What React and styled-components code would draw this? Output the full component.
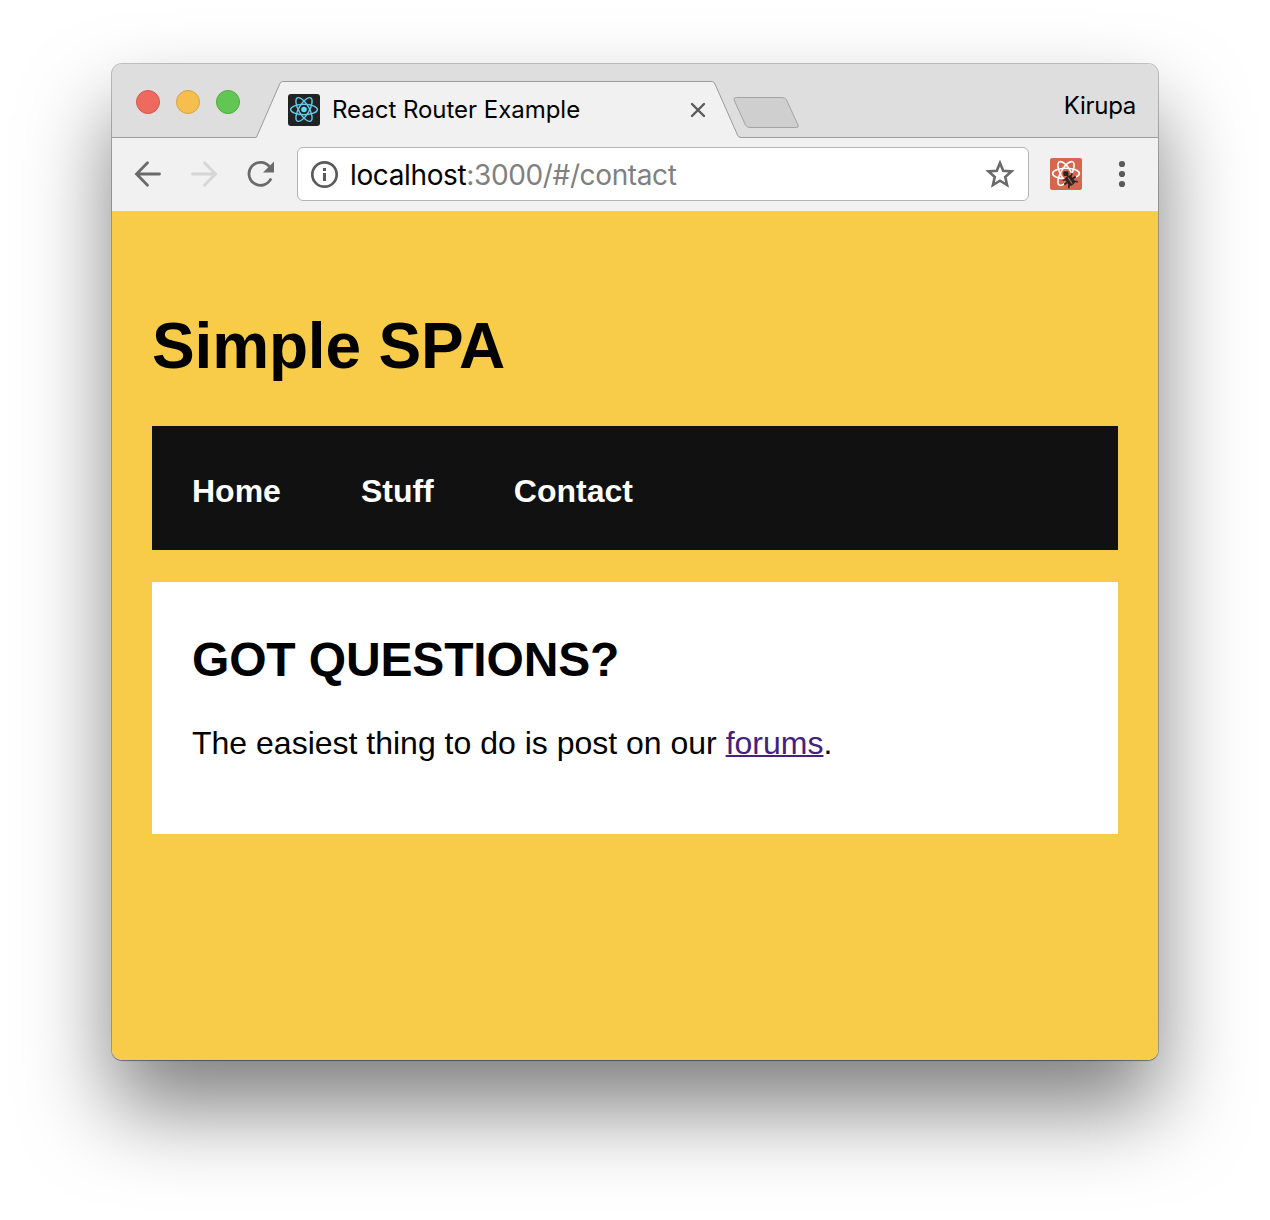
import React from "react";
import styled, { createGlobalStyle } from "styled-components";

const GlobalStyle = createGlobalStyle`
  * { box-sizing: border-box; }
  body { margin: 0; background: #fff; }
`;

const uiFont = `Inter, "Liberation Sans", sans-serif`;
const pageFont = `"Liberation Sans", Arial, sans-serif`;

const Desktop = styled.div`
  width: 1270px;
  height: 1220px;
  padding: 64px 112px 160px;
  overflow: hidden;
`;

const Window = styled.div`
  display: flex;
  flex-direction: column;
  width: 1046px;
  height: 996px;
  border-radius: 10px;
  box-shadow: 0 0 0 1px rgba(0, 0, 0, 0.22), 0 1px 1px rgba(0, 0, 0, 0.25), 0 48px 86px rgba(0, 0, 0, 0.5);
`;

const TabStrip = styled.div`
  display: flex;
  align-items: flex-end;
  height: 74px;
  background: #dedede;
  border-radius: 10px 10px 0 0;
  box-shadow: inset 0 -1px 0 #9b9b9b;
`;

const Lights = styled.div`
  display: flex;
  flex: none;
  gap: 16px;
  width: 144px;
  padding: 0 0 24px 24px;
`;

const Light = styled.span`
  width: 24px;
  height: 24px;
  border-radius: 50%;
  background: ${(p) => p.$fill};
  border: 1px solid ${(p) => p.$edge};
`;

const Tab = styled.div`
  position: relative;
  display: flex;
  flex: none;
  align-items: center;
  width: 485px;
  height: 57px;
  padding: 0 35px 0 32px;
`;

const TabShape = styled.svg`
  position: absolute;
  inset: 0;
`;

const Favicon = styled.svg`
  position: relative;
  flex: none;
`;

const TabTitle = styled.span`
  position: relative;
  flex: 1;
  margin-left: 12px;
  font: 400 24px/30px ${uiFont};
  letter-spacing: -0.03px;
  white-space: nowrap;
  color: #000;
`;

const CloseIcon = styled.svg`
  position: relative;
  flex: none;
`;

const NewTab = styled.svg`
  flex: none;
  margin: 0 0 8px -9px;
`;

const Profile = styled.span`
  margin: 0 22px 17px auto;
  font: 400 24px/30px ${uiFont};
  letter-spacing: -0.3px;
  color: #000;
`;

const Toolbar = styled.div`
  display: flex;
  align-items: center;
  height: 74px;
  padding: 0 20px 2px 22px;
  background: #f1f1f1;
  border-bottom: 1px solid #d0d0d0;
`;

const NavIcons = styled.div`
  display: flex;
  flex: none;
  gap: 24px;
  width: 163px;
`;

const AddressBar = styled.div`
  display: flex;
  flex: none;
  align-items: center;
  width: 732px;
  height: 54px;
  padding: 0 12px 0 10px;
  background: #fff;
  border: 1px solid #b4b4b4;
  border-radius: 6px;
`;

const Url = styled.span`
  flex: 1;
  margin-left: 10px;
  padding-top: 2px;
  font: 400 28px/34px ${uiFont};
  letter-spacing: -0.37px;
  white-space: nowrap;
  color: #808080;
`;

const Host = styled.span`
  color: #000;
`;

const Extension = styled.svg`
  flex: none;
  margin-left: 21px;
`;

const MenuIcon = styled.svg`
  flex: none;
  margin-left: 24px;
`;

const Page = styled.main`
  flex: 1;
  padding: 101px 40px 0;
  background: #f8cc48;
  border-radius: 0 0 10px 10px;
  font-family: ${pageFont};
  color: #000;
`;

const Title = styled.h1`
  margin: 0 0 47px;
  font-size: 64px;
  line-height: 66px;
  font-weight: 700;
  letter-spacing: -0.15px;
`;

const NavBar = styled.nav`
  display: flex;
  align-items: center;
  gap: 80px;
  height: 124px;
  padding: 5px 40px 0;
  background: #111;
`;

const NavLink = styled.a`
  font-size: 32px;
  line-height: 36px;
  font-weight: 700;
  color: #fff;
`;

const Card = styled.section`
  height: 252px;
  margin-top: 32px;
  padding: 51px 40px 0;
  background: #fff;
`;

const CardTitle = styled.h2`
  margin: 0;
  font-size: 48px;
  line-height: 54px;
  font-weight: 700;
  letter-spacing: -0.15px;
`;

const Paragraph = styled.p`
  margin: 38px 0 0;
  font-size: 32px;
  line-height: 36px;
`;

const ForumLink = styled.a`
  color: #44217f;
  text-decoration: underline;
  text-decoration-thickness: 2px;
`;

function Orbits({ color, width }) {
  return (
    <g fill="none" stroke={color} strokeWidth={width}>
      <ellipse cx="16" cy="15.500" rx="13.400" ry="5.200" />
      <ellipse cx="16" cy="15.500" rx="13.400" ry="5.200" transform="rotate(60 16 15.5)" />
      <ellipse cx="16" cy="15.500" rx="13.400" ry="5.200" transform="rotate(120 16 15.5)" />
    </g>
  );
}

function ReactFavicon() {
  return (
    <Favicon width="32" height="32" viewBox="0 0 32 32">
      <rect width="32" height="32" rx="3" fill="#222" />
      <Orbits color="#61cdec" width="1.4" />
      <circle cx="16" cy="15.500" r="2.800" fill="#61dafb" />
    </Favicon>
  );
}

function DevtoolsIcon() {
  return (
    <Extension width="32" height="32" viewBox="0 0 32 32">
      <rect width="32" height="32" rx="2" fill="#d6674f" />
      <Orbits color="#fff" width="1.6" />
      <path d="M14 17.500L22 14.500 26 19.500 27 29H14.500Z" fill="#d6674f" />
      <rect x="13.300" y="13.200" width="5.200" height="4.800" rx="1.200" fill="#2b2522" />
      <g transform="rotate(-35 20 22.5)">
        <path
          d="M17 19.500l-3-1.500M16.500 22.500h-3.500M17 25.500l-2.500 2.500M23 19.500l3-1.500M23.500 22.500h3.500M23 25.500l2.500 2.500"
          stroke="#2b2522"
          strokeWidth="1.700"
        />
        <rect x="16.400" y="17.500" width="7.200" height="10" rx="2.400" fill="#2b2522" />
        <path d="M20 19v7.500" stroke="#d6674f" strokeWidth="1" />
      </g>
    </Extension>
  );
}

export default function App() {
  return (
    <>
      <GlobalStyle />
      <Desktop>
        <Window>
          <TabStrip>
            <Lights>
              <Light $fill="#ee6a5f" $edge="#d9554c" />
              <Light $fill="#f6be4f" $edge="#dba43c" />
              <Light $fill="#62c655" $edge="#4cad3c" />
            </Lights>
            <Tab>
              <TabShape width="485" height="57" viewBox="0 0 485 57">
                <path
                  d="M0 57V56.500Q.500 56.500 1 55L23.700 3Q24.800 .500 26.500 .500H456Q458 .500 459 3L481.500 54Q482.500 56.500 485 56.500V57Z"
                  fill="#f1f1f1"
                />
                <path
                  d="M0 56.500Q.500 56.500 1 55L23.700 3Q24.800 .500 26.500 .500H456Q458 .500 459 3L481.500 54Q482.500 56.500 485 56.500"
                  fill="none"
                  stroke="#9b9b9b"
                />
              </TabShape>
              <ReactFavicon />
              <TabTitle>React Router Example</TabTitle>
              <CloseIcon width="16" height="16" viewBox="0 0 16 16">
                <path d="M2 2l12 12M14 2L2 14" stroke="#5a5a5a" strokeWidth="2.400" strokeLinecap="round" />
              </CloseIcon>
            </Tab>
            <NewTab width="68" height="34" viewBox="0 0 68 34">
              <path
                d="M4.500 1.500H50Q53 1.500 54.500 4L66 29Q67 31.500 64.500 31.500H18Q15 31.500 13.500 29L2.500 5Q1 1.500 4.500 1.500Z"
                fill="#cfcfcf"
                stroke="#a3a3a3"
              />
            </NewTab>
            <Profile>Kirupa</Profile>
          </TabStrip>
          <Toolbar>
            <NavIcons>
              <svg width="32" height="32" viewBox="0 0 32 32" fill="none" stroke="#6a6a6a" strokeWidth="2.800">
                <path d="M25.500 16H3M13.500 4.700L2.500 16 13.500 27.300" strokeLinecap="round" />
              </svg>
              <svg width="32" height="32" viewBox="0 0 32 32" fill="none" stroke="#d6d6d6" strokeWidth="2.800">
                <path d="M2.500 16H25M14.500 4.700L25.500 16 14.500 27.300" strokeLinecap="round" />
              </svg>
              <svg width="32" height="32" viewBox="0 0 32 32">
                <path d="M23.400 8.500A11.500 11.500 0 1 0 25 20.500" fill="none" stroke="#6a6a6a" strokeWidth="2.800" />
                <path d="M28 3.500V14.500H17Z" fill="#6a6a6a" />
              </svg>
            </NavIcons>
            <AddressBar>
              <svg width="32" height="32" viewBox="0 0 32 32">
                <circle cx="16.500" cy="16.500" r="12.200" fill="none" stroke="#5a5a5a" strokeWidth="2.700" />
                <path d="M15 10h3v3h-3zM15 15h3v8h-3z" fill="#5a5a5a" />
              </svg>
              <Url>
                <Host>localhost</Host>:3000/#/contact
              </Url>
              <svg width="32" height="32" viewBox="0 0 32 32">
                <path
                  d="M16 5L19.200 12.700 27.500 13.400 21.200 18.900 23.100 27 16 22.700 8.900 27 10.800 18.900 4.500 13.400 12.800 12.700Z"
                  fill="none"
                  stroke="#6a6a6a"
                  strokeWidth="2.600"
                />
              </svg>
            </AddressBar>
            <DevtoolsIcon />
            <MenuIcon width="32" height="32" viewBox="0 0 32 32" fill="#5a5a5a">
              <circle cx="16" cy="6" r="3.100" />
              <circle cx="16" cy="16" r="3.100" />
              <circle cx="16" cy="26" r="3.100" />
            </MenuIcon>
          </Toolbar>
          <Page>
            <Title>Simple SPA</Title>
            <NavBar>
              <NavLink>Home</NavLink>
              <NavLink>Stuff</NavLink>
              <NavLink>Contact</NavLink>
            </NavBar>
            <Card>
              <CardTitle>GOT QUESTIONS?</CardTitle>
              <Paragraph>
                The easiest thing to do is post on our <ForumLink>forums</ForumLink>.
              </Paragraph>
            </Card>
          </Page>
        </Window>
      </Desktop>
    </>
  );
}
